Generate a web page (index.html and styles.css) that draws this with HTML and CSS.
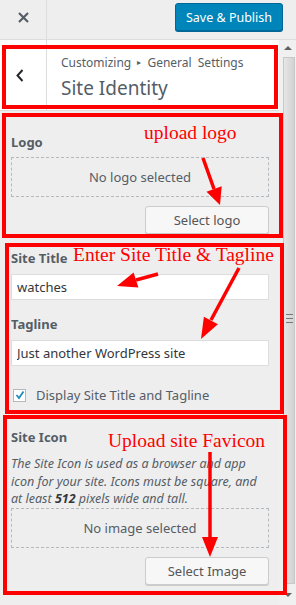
FILE: index.html
```html
<!DOCTYPE html>
<html lang="en">
<head>
    <meta charset="UTF-8">
    <meta name="viewport" content="width=device-width, initial-scale=1.0">
    <title>Customize: Site Identity</title>
    <link rel="stylesheet" href="styles.css">
</head>
<body>
    <div class="customizer">
        <div class="topbar">
            <button class="close-btn" aria-label="Close">
                <svg width="11" height="11" viewBox="0 0 11 11"><path d="M1 1L10 10M10 1L1 10" stroke="#555d66" stroke-width="2.2"/></svg>
            </button>
            <div class="topbar-fill"></div>
            <button class="publish-btn">Save &amp; Publish</button>
        </div>

        <div class="main">
            <div class="panel">
                <div class="panel-head">
                    <button class="back-btn" aria-label="Back">
                        <svg width="8" height="13" viewBox="0 0 8 13"><path d="M6.5 1L1.5 6.5L6.5 12" fill="none" stroke="#23282d" stroke-width="2"/></svg>
                    </button>
                    <div class="panel-title">
                        <span class="crumbs">Customizing <span class="crumb-sep">&#9656;</span> General Settings</span>
                        <h3>Site Identity</h3>
                    </div>
                </div>

                <div class="control control-logo">
                    <span class="control-label">Logo</span>
                    <div class="placeholder">No logo selected</div>
                    <div class="actions"><button class="btn">Select logo</button></div>
                </div>

                <div class="control">
                    <span class="control-label">Site Title</span>
                    <input class="text-input" type="text" value="watches">
                </div>

                <div class="control">
                    <span class="control-label">Tagline</span>
                    <input class="text-input" type="text" value="Just another WordPress site">
                </div>

                <label class="check-row">
                    <span class="checkbox">
                        <svg width="10" height="10" viewBox="0 0 10 10"><path d="M1.5 5L4 8L8.5 1.5" fill="none" stroke="#1e8cbe" stroke-width="1.8"/></svg>
                    </span>
                    Display Site Title and Tagline
                </label>

                <div class="control control-icon">
                    <span class="control-label">Site Icon</span>
                    <p class="description">The Site Icon is used as a browser and app icon for your site. Icons must be square, and at least <strong>512</strong> pixels wide and tall.</p>
                    <div class="placeholder">No image selected</div>
                    <div class="actions"><button class="btn">Select Image</button></div>
                </div>
            </div>

            <div class="scrollbar">
                <span class="arrow-up"></span>
                <div class="thumb"><span class="grip"></span></div>
                <span class="arrow-down"></span>
            </div>
        </div>

        <!-- annotations drawn over the screenshot -->
        <svg class="notes" width="296" height="605" viewBox="0 0 296 605">
            <g fill="none" stroke="#ff0000" stroke-width="4">
                <rect x="4" y="47" width="272" height="60"/>
                <rect x="4" y="115" width="277" height="121"/>
                <rect x="7" y="245" width="275" height="167"/>
                <rect x="5" y="417" width="280" height="176"/>
            </g>
            <g stroke="#ff0000" stroke-width="3.5">
                <line x1="203" y1="158" x2="214" y2="189"/>
                <line x1="158" y1="274" x2="136" y2="280"/>
                <line x1="239" y1="268" x2="211" y2="320"/>
                <line x1="210" y1="452" x2="210" y2="538"/>
            </g>
            <g fill="#ff0000">
                <polygon points="220,205 206.5,191.7 221.7,186.3"/>
                <polygon points="117,286 133.6,272.4 138.4,287.6"/>
                <polygon points="201,339 203.9,316.7 217.9,324.3"/>
                <polygon points="210,557 202,537 218,537"/>
            </g>
            <g class="note-text" fill="#ff0000">
                <text x="144" y="139">upload logo</text>
                <text x="73" y="261">Enter Site Title &amp; Tagline</text>
                <text x="108" y="447">Upload site Favicon</text>
            </g>
        </svg>
    </div>
</body>
</html>
```

FILE: styles.css
```css
body {
    margin: 0;
    font-family: "Segoe UI", "Noto Sans", sans-serif;
    font-size: 13px;
    color: #555d66;
    background-color: #eee;
}

.customizer {
    position: relative;
    width: 296px;
    height: 605px;
    overflow: hidden;
    display: flex;
    flex-direction: column;
}

/* top bar */

.topbar {
    display: flex;
    align-items: flex-start;
    height: 39px;
    border-bottom: 1px solid #ddd;
    background-color: #eee;
}

.close-btn {
    width: 47px;
    height: 39px;
    padding: 0 0 5px 0;
    border: none;
    border-right: 1px solid #ddd;
    background: none;
    display: flex;
    align-items: center;
    justify-content: center;
}

.topbar-fill {
    flex: 1;
}

.publish-btn {
    margin: 3px 13px 0 0;
    width: 108px;
    height: 28px;
    padding: 0;
    border: 1px solid #006799;
    border-radius: 3px;
    background-color: #0085ba;
    box-shadow: 0 1px 0 #006799;
    color: #fff;
    font-family: inherit;
    font-size: 12.5px;
}

/* body */

.main {
    flex: 1;
    display: flex;
}

.panel {
    flex: 1;
    display: flex;
    flex-direction: column;
}

.panel-head {
    display: flex;
    height: 70px;
    background-color: #fff;
    border-bottom: 1px solid #ddd;
}

.back-btn {
    width: 47px;
    padding: 0 6px 0 0;
    border: none;
    border-right: 1px solid #ddd;
    background: none;
    display: flex;
    align-items: center;
    justify-content: center;
}

.panel-title {
    padding: 13px 0 0 14px;
}

.crumbs {
    display: block;
    font-size: 12px;
    line-height: 18px;
    word-spacing: 3px;
}

.crumb-sep {
    font-size: 8px;
    vertical-align: 2px;
}

.panel-title h3 {
    margin: 3px 0 0 0;
    font-size: 19px;
    font-weight: 400;
    line-height: 26px;
}

.control {
    display: flex;
    flex-direction: column;
    padding: 0 10px 0 11px;
}

.control-logo {
    margin-top: 21px;
}

.control-label {
    font-size: 13px;
    font-weight: 700;
    line-height: 20px;
    color: #555d66;
    margin-bottom: 5px;
}

.placeholder {
    height: 38px;
    border: 1px dashed #b4b9be;
    display: flex;
    align-items: center;
    justify-content: center;
    font-size: 13px;
}

.actions {
    display: flex;
    justify-content: flex-end;
    margin-top: 9px;
}

.btn {
    width: 124px;
    height: 28px;
    padding: 0;
    border: 1px solid #ccc;
    border-radius: 3px;
    background-color: #f7f7f7;
    box-shadow: 0 1px 0 #ccc;
    color: #555;
    font-family: inherit;
    font-size: 13px;
}

.control + .control {
    margin-top: 14px;
}

.control-logo + .control {
    margin-top: 14px;
}

.text-input {
    height: 26px;
    box-sizing: border-box;
    margin: 1px 0 0 0;
    padding: 0 5px;
    border: 1px solid #ddd;
    background-color: #fff;
    color: #32373c;
    font-family: inherit;
    font-size: 13px;
}

.check-row {
    display: flex;
    align-items: center;
    gap: 10px;
    margin: 20px 0 0 13px;
    font-size: 13px;
    line-height: 18px;
}

.checkbox {
    width: 11px;
    height: 11px;
    border: 1px solid #b4b9be;
    background-color: #fff;
    display: flex;
    align-items: center;
    justify-content: center;
}

.control-icon {
    margin-top: 23px;
}

.control-icon .control-label {
    margin-bottom: 8px;
}

.description {
    margin: 0;
    font-style: italic;
    font-size: 12.5px;
    line-height: 17.5px;
}

.description strong {
    color: #32373c;
}

/* scrollbar */

.scrollbar {
    width: 17px;
    display: flex;
    flex-direction: column;
    align-items: center;
    background-color: #f0f0f0;
}

.arrow-up,
.arrow-down {
    width: 0;
    height: 0;
    border-left: 4px solid transparent;
    border-right: 4px solid transparent;
}

.arrow-up {
    margin-top: 6px;
    border-bottom: 4px solid #606060;
}

.arrow-down {
    margin-top: 9px;
    border-top: 4px solid #606060;
}

.thumb {
    width: 12px;
    margin-top: 7px;
    margin-left: 3px;
    height: 527px;
    box-sizing: border-box;
    border: 1px solid #c8c8c8;
    background: linear-gradient(to right, #e6e6e6, #d2d2d2);
    display: flex;
    align-items: center;
    justify-content: center;
}

.grip {
    width: 7px;
    height: 7px;
    border-top: 1px solid #777;
    border-bottom: 1px solid #777;
    position: relative;
    margin-top: -5px;
}

.grip::after {
    content: "";
    position: absolute;
    left: 0;
    right: 0;
    top: 3px;
    border-top: 1px solid #777;
}

/* annotations */

.notes {
    position: absolute;
    left: 0;
    top: 0;
    pointer-events: none;
}

.note-text {
    font-family: "Liberation Serif", serif;
    font-size: 19.5px;
}
```
